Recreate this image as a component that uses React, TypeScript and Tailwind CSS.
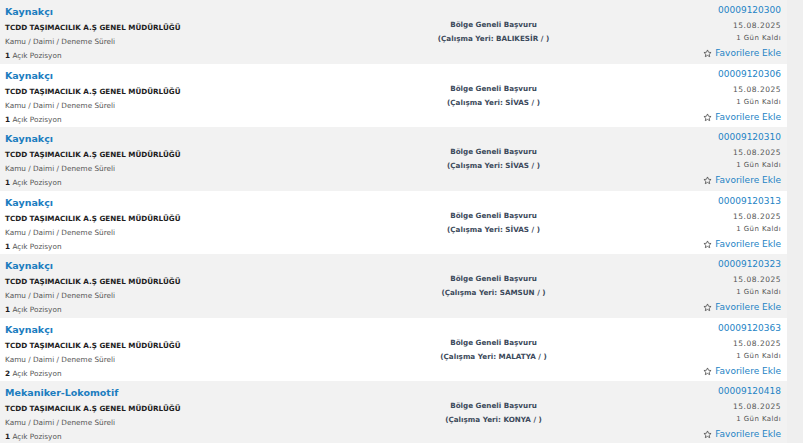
const rows = [
  { title: "Kaynakçı", place: "BALIKESİR", no: "00009120300", count: 1 },
  { title: "Kaynakçı", place: "SİVAS", no: "00009120306", count: 1 },
  { title: "Kaynakçı", place: "SİVAS", no: "00009120310", count: 1 },
  { title: "Kaynakçı", place: "SİVAS", no: "00009120313", count: 1 },
  { title: "Kaynakçı", place: "SAMSUN", no: "00009120323", count: 1 },
  { title: "Kaynakçı", place: "MALATYA", no: "00009120363", count: 2 },
  { title: "Mekaniker-Lokomotif", place: "KONYA", no: "00009120418", count: 1 },
];

function Star() {
  return (
    <svg width="9" height="9" viewBox="0 0 24 24" fill="none" stroke="#444" strokeWidth="2" strokeLinejoin="round">
      <path d="M12 2.5l2.9 6.2 6.6.7-5 4.5 1.4 6.6L12 17.1l-5.9 3.4 1.4-6.6-5-4.5 6.6-.7z" />
    </svg>
  );
}

export default function App() {
  return (
    <div className="w-[803px] h-[443px] overflow-hidden bg-[#efefef] font-['DejaVu_Sans',sans-serif]">
      <div className="w-[787px]">
        {rows.map((r, i) => (
          <div
            key={r.no}
            className={`flex items-start px-[5px] ${i % 2 === 0 ? "bg-[#f2f2f2] h-[64px]" : "bg-white h-[63px]"}`}
          >
            <div className="w-[310px] pt-[4px]">
              <div className="text-[9.5px] font-bold text-[#1b7dbf] leading-[15px]">{r.title}</div>
              <div className="text-[7.2px] font-bold text-[#1d1d1d] leading-[14px] mt-[2px]">
                TCDD TAŞIMACILIK A.Ş GENEL MÜDÜRLÜĞÜ
              </div>
              <div className="text-[7.3px] text-[#555] leading-[14px]">Kamu / Daimi / Deneme Süreli</div>
              <div className="text-[7.3px] text-[#555] leading-[14px]">
                <span className="font-bold text-[#1d1d1d]">{r.count}</span> Açık Pozisyon
              </div>
            </div>
            <div className="flex-1 flex flex-col items-center pt-[18px] text-[7.2px] font-bold text-[#3c4a5b] leading-[14px]">
              <div>Bölge Geneli Başvuru</div>
              <div>(Çalışma Yeri: {r.place} / )</div>
            </div>
            <div className="w-[110px] flex flex-col items-end pt-[3px] pr-[1px]">
              <div className="text-[9px] text-[#2483c5] leading-[15px]">{r.no}</div>
              <div className="text-[7.5px] tracking-[0.5px] text-[#555] leading-[13px] mt-[1px]">15.08.2025</div>
              <div className="text-[7px] tracking-[0.4px] text-[#555] leading-[12px]">1 Gün Kaldı</div>
              <div className="flex items-center gap-[3px] text-[9px] text-[#2483c5] leading-[15px] mt-[2px]">
                <Star />
                Favorilere Ekle
              </div>
            </div>
          </div>
        ))}
      </div>
    </div>
  );
}
